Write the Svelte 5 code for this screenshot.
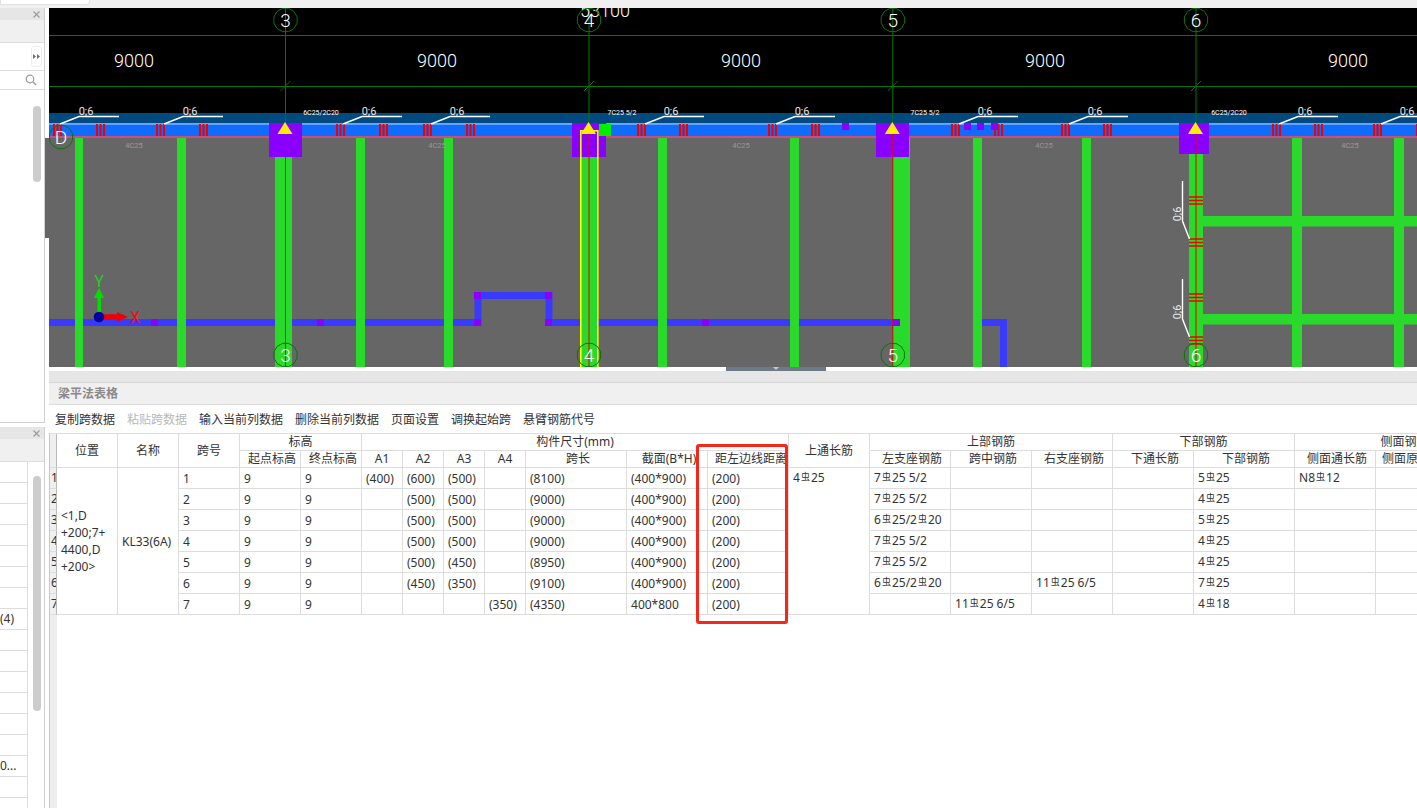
<script>
  const poly = (cx, cy, r = 12, n = 12) =>
    Array.from({ length: n }, (_, k) => {
      const a = (Math.PI * 2 * (k + 0.5)) / n;
      return `${(cx + r * Math.cos(a)).toFixed(1)},${(cy + r * Math.sin(a)).toFixed(1)}`;
    }).join(' ');

  const axes = [
    { x: 285.5, label: '3' },
    { x: 589, label: '4' },
    { x: 892.8, label: '5' },
    { x: 1196, label: '6' }
  ];
  const beams = [
    [75, 8], [177, 9], [275, 17], [356, 9], [444, 9], [580, 18], [658, 9], [790, 9],
    [893, 17], [973, 9], [1082, 9], [1189, 14], [1292, 10], [1394, 10]
  ];
  const stirrups = [53, 96, 156, 199, 336, 379, 423, 466, 637, 679, 768, 811, 951, 994, 1061, 1103, 1272, 1314, 1373, 1416];
  const leaders = [60, 164, 343, 431, 645, 776, 959, 1069, 1279, 1381];
  const spans = [134, 437, 741, 1045, 1348];
  const pillars = [
    [269, 33, 34], [572, 34, 34], [876, 33, 34], [1179, 30, 31]
  ];
  const dots = [[842, 123], [964, 123], [977, 123], [991, 123]];
  const beamDots = [[151, 319], [317, 319], [474, 319], [545, 319], [474, 292], [545, 292], [702, 319]];
  const smallNotes = [
    [321, '6C25/2C20'], [622, '7C25 5/2'], [925, '7C25 5/2'], [1229, '6C25/2C20']
  ];
  const sizeNotes = [134, 437, 741, 1044, 1350];
  const hStirrups = [196, 238, 293, 336];

  const tools = ['复制跨数据', '粘贴跨数据', '输入当前列数据', '删除当前列数据', '页面设置', '调换起始跨', '悬臂钢筋代号'];
  const cols = [7, 61, 61, 61, 61, 61, 41, 41, 41, 41, 101, 81, 81, 81, 81, 81, 81, 81, 101, 81, 81, 58];
  const rows = [
    ['(400)', '(600)', '(500)', '', '(8100)', '(400*900)', '7虫25 5/2', '', '', '', '5虫25', 'N8虫12'],
    ['', '(500)', '(500)', '', '(9000)', '(400*900)', '7虫25 5/2', '', '', '', '4虫25', ''],
    ['', '(500)', '(500)', '', '(9000)', '(400*900)', '6虫25/2虫20', '', '', '', '5虫25', ''],
    ['', '(500)', '(500)', '', '(9000)', '(400*900)', '7虫25 5/2', '', '', '', '4虫25', ''],
    ['', '(500)', '(450)', '', '(8950)', '(400*900)', '7虫25 5/2', '', '', '', '4虫25', ''],
    ['', '(450)', '(350)', '', '(9100)', '(400*900)', '6虫25/2虫20', '', '11虫25 6/5', '', '7虫25', ''],
    ['', '', '', '(350)', '(4350)', '400*800', '', '11虫25 6/5', '', '', '4虫18', '']
  ];
  const parts = (v) => v.split('虫');
  const listRows = Array.from({ length: 16 }, (_, i) => (i === 7 ? '(4)' : i === 14 ? '0...' : ''));
</script>

{#snippet rebar(v)}{#each parts(v) as p, i}{#if i > 0}<span class="rb">虫</span>{/if}{p}{/each}{/snippet}

{#snippet closeIcon()}
  <svg class="close" width="7" height="7" viewBox="0 0 7 7">
    <path d="M0.5 0.5L6.5 6.5M6.5 0.5L0.5 6.5" stroke="#999" stroke-width="1.1" fill="none" />
  </svg>
{/snippet}

<div class="page">
  <div class="topbar"><div class="tab"></div></div>

  <div class="main">
    <aside class="side">
      <section class="panel first">
        <div class="ptitle">{@render closeIcon()}</div>
        <div class="pband"></div>
        <div class="prow tall">
          <span class="expand">
            <svg width="7" height="5" viewBox="0 0 7 5"><path d="M0 0L3 2.5L0 5ZM4 0L7 2.5L4 5Z" fill="#667085" /></svg>
          </span>
        </div>
        <div class="prow search">
          <svg width="12" height="12" viewBox="0 0 12 12" class="mag">
            <circle cx="5" cy="5" r="3.8" fill="none" stroke="#999" stroke-width="1.2" />
            <path d="M8 8l3 3" stroke="#999" stroke-width="1.4" />
          </svg>
        </div>
        <div class="scroll one"></div>
      </section>
      <section class="panel second">
        <div class="ptitle">{@render closeIcon()}</div>
        <div class="pband"></div>
        <div class="list">
          {#each listRows as t}
            <div class="li">{t}</div>
          {/each}
        </div>
        <div class="scroll two"></div>
      </section>
    </aside>

    <div class="work">
      <svg class="cad" width="1368" height="359" viewBox="49 8 1368 359">
        <rect x="49" y="8" width="1368" height="105" fill="#000" />
        <rect x="49" y="113" width="1368" height="10" fill="#004a80" />
        <rect x="49" y="123" width="1368" height="1.5" fill="#6ba6f5" />
        <rect x="49" y="124.5" width="1368" height="11.5" fill="#0f6cff" />
        <rect x="49" y="138" width="1368" height="229" fill="#666" />
        <rect x="49" y="136" width="1368" height="2" fill="#c8507a" />

        <path d="M49 35.5H1417M49 86.5H1417" stroke="#087508" stroke-width="1" />

        <!-- blue beam -->
        <path d="M49 322.5H478V295.5H549V322.5H899" fill="none" stroke="#3a3aff" stroke-width="7" />
        <path d="M982 322.5H1003.5V367" fill="none" stroke="#3a3aff" stroke-width="7" />
        {#each beamDots as [x, y]}
          <rect {x} {y} width="7" height="7" fill="#8a00ff" />
        {/each}

        <!-- green beams -->
        {#each beams as [x, w]}
          <rect {x} y="138" width={w} height="229" fill="#2ada2a" />
        {/each}
        <rect x="1203" y="216" width="214" height="10.5" fill="#2ada2a" />
        <rect x="1203" y="314" width="214" height="10.5" fill="#2ada2a" />
        <rect x="893" y="319" width="7" height="7" fill="#8a00ff" />

        <!-- stirrups on the top beam -->
        {#each stirrups as x}
          <path d="M{x + 1} 124V136M{x + 4.5} 124V136M{x + 8} 124V136" stroke="#f00000" stroke-width="2" />
        {/each}
        {#each hStirrups as y}
          <path d="M1189 {y + 1}H1203M1189 {y + 4.5}H1203M1189 {y + 8}H1203" stroke="#f00000" stroke-width="1.6" />
        {/each}

        <!-- columns -->
        {#each pillars as [x, w, h]}
          <rect {x} y="123" width={w} height={h} fill="#8a00ff" />
        {/each}
        {#each dots as [x, y]}
          <rect {x} {y} width="7" height="7" fill="#8a00ff" />
        {/each}
        <rect x="599" y="124" width="12" height="12" fill="#00f000" />
        <rect x="580.8" y="130.8" width="17" height="240" fill="none" stroke="#ffff00" stroke-width="1.6" />

        <!-- grid axes -->
        {#each axes as a}
          <path d="M{a.x} 8V123" stroke="#087508" stroke-width="1" />
          <path d="M{a.x} 132V367" stroke="#e60000" stroke-width="1" />
          <path d="M{a.x - 5} 91L{a.x + 5} 81" stroke="#087508" stroke-width="1" />
        {/each}
        <text class="dim" x="605" y="17" text-anchor="middle">53100</text>
        {#each axes as a}
          <polygon points={poly(a.x, 20)} fill="none" stroke="#087508" />
          <text class="axis" x={a.x} y="27" text-anchor="middle">{a.label}</text>
          <polygon points={poly(a.x, 355)} fill="none" stroke="#087508" />
          <text class="axis" x={a.x} y="362" text-anchor="middle">{a.label}</text>
          <path d="M{a.x - 8} 134H{a.x + 7}L{a.x - 0.5} 122Z" fill="#ffee00" />
        {/each}
        <polygon points={poly(61, 137)} fill="none" stroke="#087508" />
        <text class="axis" x="61" y="144" text-anchor="middle">D</text>

        {#each spans as x}
          <text class="dim" {x} y="67" text-anchor="middle">9000</text>
        {/each}

        <!-- leaders -->
        {#each leaders as x}
          <path d="M{x} 124L{x + 19} 116.5H{x + 59}" fill="none" stroke="#fff" stroke-width="1.4" />
          <text class="note" x={x + 26} y="115" text-anchor="middle">0;6</text>
        {/each}
        <path d="M1182.5 181V221L1189.5 239M1182.5 279V319L1189.5 337" fill="none" stroke="#fff" stroke-width="1.4" />
        <text class="note" text-anchor="middle" transform="translate(1181 214) rotate(-90)">0;6</text>
        <text class="note" text-anchor="middle" transform="translate(1181 312) rotate(-90)">0;6</text>

        {#each smallNotes as [x, t]}
          <text class="tiny" {x} y="115" text-anchor="middle">{t}</text>
        {/each}
        {#each sizeNotes as x}
          <text class="size" {x} y="148" text-anchor="middle">4C25</text>
        {/each}

        <!-- origin gizmo -->
        <path d="M99.2 312V298" stroke="#00e000" stroke-width="3.5" />
        <path d="M94 298H104L99 288Z" fill="#00e000" />
        <path d="M104 317H117" stroke="#f00000" stroke-width="5.5" />
        <path d="M117 312V322L128 317Z" fill="#f00000" />
        <circle cx="99" cy="317" r="5.3" fill="#0000a0" />
        <text class="gy" x="99" y="287" text-anchor="middle">Y</text>
        <text class="gx" x="135" y="323" text-anchor="middle">X</text>
      </svg>

      <div class="handle"><span></span></div>
      <div class="sideHandle"></div>

      <div class="gap"></div>
      <div class="strip"></div>
      <div class="title">梁平法表格</div>
      <div class="tools">
        {#each tools as t, i}
          <span class:off={i === 1}>{t}</span>
        {/each}
      </div>

      <div class="sheet">
        <table>
          <colgroup>
            {#each cols as c}<col width={c} />{/each}
          </colgroup>
          <thead>
            <tr>
              <th class="rh" rowspan="2"></th>
              <th rowspan="2">位置</th>
              <th rowspan="2">名称</th>
              <th rowspan="2">跨号</th>
              <th colspan="2">标高</th>
              <th colspan="7">构件尺寸(mm)</th>
              <th rowspan="2">上通长筋</th>
              <th colspan="3">上部钢筋</th>
              <th colspan="2">下部钢筋</th>
              <th colspan="3">侧面钢筋</th>
            </tr>
            <tr class="sub">
              <th>起点标高</th>
              <th>终点标高</th>
              <th class="plain">A1</th>
              <th class="plain">A2</th>
              <th class="plain">A3</th>
              <th class="plain">A4</th>
              <th>跨长</th>
              <th>截面(B*H)</th>
              <th class="dist">距左边线距离</th>
              <th>左支座钢筋</th>
              <th>跨中钢筋</th>
              <th>右支座钢筋</th>
              <th>下通长筋</th>
              <th>下部钢筋</th>
              <th>侧面通长筋</th>
              <th>侧面原位钢筋</th>
              <th></th>
            </tr>
          </thead>
          <tbody>
            {#each rows as r, i}
              <tr>
                <td class="rh">{i + 1}</td>
                {#if i === 0}
                  <td rowspan="7" class="loc">&lt;1,D<br />+200;7+<br />4400,D<br />+200&gt;</td>
                  <td rowspan="7" class="name">KL33(6A)</td>
                {/if}
                <td>{i + 1}</td>
                <td>9</td>
                <td>9</td>
                {#each r.slice(0, 6) as v}<td>{v}</td>{/each}
                <td>(200)</td>
                {#if i === 0}
                  <td rowspan="7" class="long">{@render rebar('4虫25')}</td>
                {/if}
                {#each r.slice(6) as v}<td>{@render rebar(v)}</td>{/each}
                <td></td>
                <td></td>
              </tr>
            {/each}
          </tbody>
        </table>
        <div class="mark"></div>
      </div>
    </div>
  </div>
</div>

<style>
  :global(body) {
    margin: 0;
    background: #fff;
    overflow: hidden;
  }
  .page {
    width: 1417px;
    height: 808px;
    display: flex;
    flex-direction: column;
    overflow: hidden;
    font: 12px "Noto Sans", "Noto Sans CJK SC", sans-serif;
    color: #333;
  }
  .topbar {
    height: 8px;
    flex: none;
    background: #f0f0f0;
  }
  .tab {
    width: 90px;
    height: 5px;
    box-sizing: border-box;
    background: #fff;
    border: 1px solid #e2e2e2;
    border-top: 0;
    border-radius: 0 0 4px 0;
  }
  .main {
    flex: 1;
    display: flex;
    min-height: 0;
  }
  .side {
    width: 45px;
    flex: none;
    display: flex;
    flex-direction: column;
    gap: 4px;
  }
  .panel {
    position: relative;
    box-sizing: border-box;
    border-right: 1px solid #d0d0d0;
    overflow: hidden;
  }
  .panel.first {
    height: 415px;
    border-bottom: 1px solid #d0d0d0;
  }
  .panel.second {
    flex: 1;
  }
  .ptitle {
    height: 12px;
    background: #e6e6e6;
    display: flex;
    justify-content: flex-end;
    align-items: center;
    padding-right: 4px;
  }
  .close {
    display: block;
  }
  .pband {
    height: 22px;
    background: #f0f0f0;
    border-bottom: 1px solid #ddd;
  }
  .prow {
    display: flex;
    align-items: center;
    justify-content: flex-end;
    border-bottom: 1px solid #ddd;
    box-sizing: border-box;
  }
  .prow.tall {
    height: 28px;
    padding-right: 2px;
  }
  .prow.search {
    height: 19px;
    padding-right: 7px;
  }
  .expand {
    width: 9px;
    height: 19px;
    border: 1px solid #eee;
    border-radius: 3px;
    display: flex;
    align-items: center;
    justify-content: center;
  }
  .scroll {
    position: absolute;
    left: 33px;
    width: 8px;
    background: #ccc;
    border-radius: 4px;
  }
  .scroll.one {
    top: 98px;
    height: 76px;
  }
  .scroll.two {
    top: 49px;
    height: 235px;
  }
  .list {
    width: 28px;
    box-sizing: border-box;
    border-right: 1px solid #ddd;
    height: 400px;
  }
  .li {
    height: 21px;
    box-sizing: border-box;
    border-bottom: 1px solid #ddd;
    line-height: 20px;
    white-space: nowrap;
    overflow: hidden;
  }
  .work {
    position: relative;
    flex: 1;
    min-width: 0;
    margin-left: 4px;
    display: flex;
    flex-direction: column;
  }
  .cad {
    display: block;
    flex: none;
  }
  .cad text {
    font-family: Roboto, "Noto Sans", sans-serif;
    fill: #fff;
  }
  .cad .dim {
    font-size: 18px;
    font-weight: 300;
  }
  .cad .axis {
    font-size: 19px;
    font-weight: 300;
  }
  .cad .note {
    font-size: 11px;
    fill: #e8e8e8;
  }
  .cad .tiny {
    font-size: 7px;
  }
  .cad .size {
    font-size: 7.5px;
    fill: #989898;
  }
  .cad .gy {
    font-size: 16px;
    fill: #1fd01f;
  }
  .cad .gx {
    font-size: 16px;
    fill: #f01010;
  }
  .handle {
    position: absolute;
    left: 677px;
    top: 359px;
    width: 100px;
    height: 4px;
    background: #6b7988;
    display: flex;
    justify-content: center;
  }
  .handle span {
    width: 0;
    height: 0;
    border: 3px solid transparent;
    border-top-color: #c4c8cc;
    border-bottom: 0;
  }
  .sideHandle {
    position: absolute;
    left: -4px;
    top: 130px;
    width: 4px;
    height: 100px;
    background: #666;
  }
  .gap {
    height: 4px;
    flex: none;
    background: #fff;
  }
  .strip {
    height: 11px;
    flex: none;
    background: #e6e6e6;
    border-bottom: 1px solid #d8d8d8;
  }
  .title {
    height: 22px;
    flex: none;
    box-sizing: border-box;
    background: #f0f0f0;
    border-bottom: 1px solid #ddd;
    padding-left: 9px;
    line-height: 21px;
    font-weight: 700;
    color: #8a8a8a;
  }
  .tools {
    height: 28px;
    flex: none;
    display: flex;
    align-items: center;
    gap: 12px;
    padding-left: 6px;
  }
  .tools .off {
    color: #b8b8b8;
  }
  .sheet {
    position: relative;
    flex: 1;
    min-height: 0;
    overflow: hidden;
    border-left: 1px solid #c8c8c8;
    background: linear-gradient(to right, #eee 7px, #fff 7px);
  }
  table {
    width: 1465px;
    table-layout: fixed;
    border-collapse: separate;
    border-spacing: 0;
    border-top: 1px solid #ddd;
    background: #fff;
  }
  th,
  td {
    box-sizing: border-box;
    border-right: 1px solid #ddd;
    border-bottom: 1px solid #ddd;
    padding: 1px 0 0 4px;
    font-weight: 400;
    white-space: nowrap;
    overflow: hidden;
    line-height: 16px;
    height: 21px;
  }
  th {
    height: 17px;
    padding: 0;
    text-align: center;
  }
  .sub th {
    padding-left: 4px;
  }
  .sub th.plain {
    padding-left: 0;
  }
  .sub th.dist {
    padding-left: 7px;
    text-align: left;
  }
  .rh {
    background: #efefef;
    padding: 0 0 0 1px;
    border-right-color: #bbb;
  }
  td.loc {
    white-space: normal;
    line-height: 17px;
    padding-left: 4px;
    padding-top: 0;
  }
  td.long {
    vertical-align: top;
    padding-top: 2px;
  }
  .rb {
    font-size: 9px;
    margin: 0 1px;
    position: relative;
    top: -2px;
  }
  .mark {
    position: absolute;
    left: 646px;
    top: 11px;
    width: 92px;
    height: 180px;
    box-sizing: border-box;
    border: 3px solid #f5261a;
    border-radius: 3px;
  }
</style>
